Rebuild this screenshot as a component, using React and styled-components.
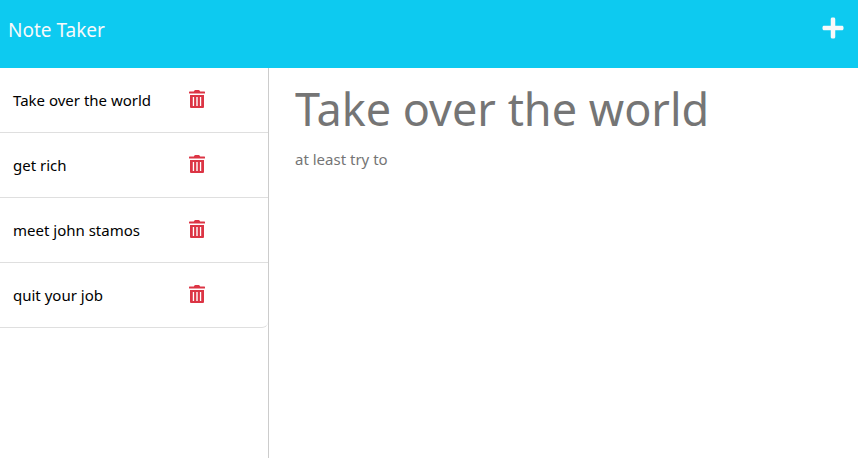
import React, { useState } from "react";
import styled, { createGlobalStyle } from "styled-components";
import { FaPlus } from "react-icons/fa";

const GlobalStyle = createGlobalStyle`
  *, *::before, *::after { box-sizing: border-box; }
  body {
    margin: 0;
    background: #fff;
    color: #212529;
    font: 16px/24px "Noto Sans", "Open Sans", sans-serif;
  }
`;

const Page = styled.div`
  display: flex;
  flex-direction: column;
  min-height: 100vh;
`;

const Navbar = styled.nav`
  display: flex;
  align-items: flex-start;
  justify-content: space-between;
  padding: 16px 13px 24px 8px;
  background: #0dcaf0;
`;

const Brand = styled.a`
  color: #f8f9fa;
  font-size: 19px;
  line-height: 28px;
  text-decoration: none;
`;

const IconButton = styled.button`
  display: flex;
  padding: 0;
  border: 0;
  background: none;
  color: ${(p) => p.$color};
  font-size: ${(p) => p.$size}px;
  cursor: pointer;
`;

const Main = styled.main`
  display: grid;
  grid-template-columns: 269px 1fr;
  flex: 1;
`;

const Sidebar = styled.aside`
  border-right: 1px solid #ccc;
`;

const NoteList = styled.ul`
  margin: 0;
  padding: 0;
  list-style: none;
`;

const NoteItem = styled.li`
  display: grid;
  grid-template-columns: 176px auto;
  align-items: center;
  justify-content: start;
  padding: 20px 0 20px 13px;
  border-bottom: 1px solid #dfdfdf;

  &:last-child {
    border-bottom-right-radius: 6px;
  }
`;

const NoteTitle = styled.button`
  padding: 0;
  border: 0;
  background: none;
  color: #000;
  font: inherit;
  font-size: 15px;
  text-align: left;
  cursor: pointer;
`;

const TrashSvg = styled.svg`
  display: block;
  width: 16px;
  height: 20px;
`;

function TrashIcon() {
  return (
    <TrashSvg viewBox="0 0 16 20" fill="currentColor" aria-hidden="true">
      <path d="M0.5 1.4H4.8L5.4 0.5Q5.7 0 6.3 0H9.7Q10.3 0 10.6 0.5L11.2 1.4H15.5Q16 1.4 16 1.9V3.1Q16 3.6 15.5 3.6H0.5Q0 3.6 0 3.1V1.9Q0 1.4 0.5 1.4Z" />
      <path
        fillRule="evenodd"
        d="M1 4.9H15V17Q15 18 14 18H2Q1 18 1 17ZM3.8 7V16H5.1V7ZM7.3 7V16H8.7V7ZM10.9 7V16H12.2V7Z"
      />
    </TrashSvg>
  );
}

const Editor = styled.section`
  display: flex;
  flex-direction: column;
  padding: 12px 24px 0 26px;
`;

const TitleInput = styled.input`
  width: 100%;
  padding: 0;
  border: 0;
  outline: 0;
  color: #757575;
  font: inherit;
  font-size: 45px;
  line-height: 58px;
`;

const TextInput = styled.textarea`
  width: 100%;
  min-height: 240px;
  margin-top: 9px;
  padding: 0;
  border: 0;
  outline: 0;
  resize: none;
  color: #757575;
  font: inherit;
  font-size: 15px;
`;

const initialNotes = [
  { id: 1, title: "Take over the world", text: "at least try to" },
  { id: 2, title: "get rich", text: "" },
  { id: 3, title: "meet john stamos", text: "" },
  { id: 4, title: "quit your job", text: "" },
];

export default function App() {
  const [notes, setNotes] = useState(initialNotes);
  const [draft, setDraft] = useState(initialNotes[0]);

  return (
    <Page>
      <GlobalStyle />
      <Navbar>
        <Brand href="/">Note Taker</Brand>
        <IconButton $color="#f8f9fa" $size={24} aria-label="New note" onClick={() => setDraft({ title: "", text: "" })}>
          <FaPlus />
        </IconButton>
      </Navbar>
      <Main>
        <Sidebar>
          <NoteList>
            {notes.map((note) => (
              <NoteItem key={note.id}>
                <NoteTitle onClick={() => setDraft(note)}>{note.title}</NoteTitle>
                <IconButton
                  $color="#dc3545"
                  $size={16}
                  aria-label={`Delete ${note.title}`}
                  onClick={() => setNotes(notes.filter((n) => n.id !== note.id))}
                >
                  <TrashIcon />
                </IconButton>
              </NoteItem>
            ))}
          </NoteList>
        </Sidebar>
        <Editor>
          <TitleInput
            aria-label="Note title"
            placeholder="Note Title"
            value={draft.title}
            onChange={(e) => setDraft({ ...draft, title: e.target.value })}
          />
          <TextInput
            aria-label="Note text"
            placeholder="Note Text"
            value={draft.text}
            onChange={(e) => setDraft({ ...draft, text: e.target.value })}
          />
        </Editor>
      </Main>
    </Page>
  );
}
